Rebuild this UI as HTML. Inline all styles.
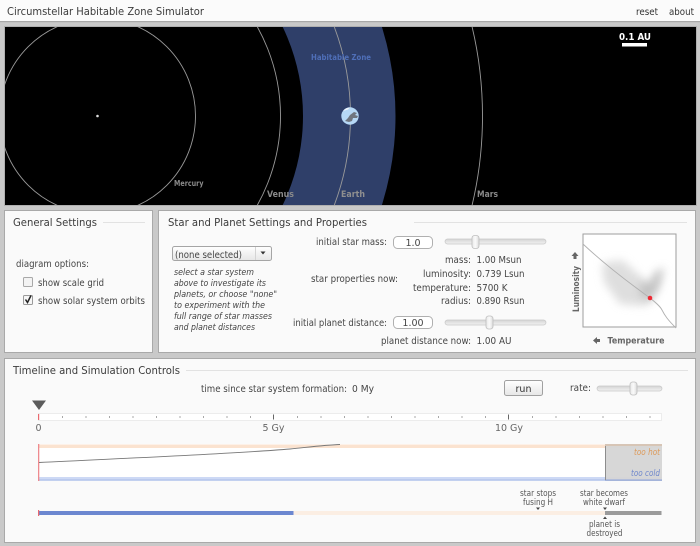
<!DOCTYPE html>
<html><head><meta charset="utf-8"><style>
html,body{margin:0;padding:0;background:#c9c9c9;width:700px;height:546px;overflow:hidden}
svg{display:block;filter:blur(0.3px)}
text{font-family:"DejaVu Sans","Liberation Sans",sans-serif;fill:#444;font-size:9.5px}
.h{font-size:11px;fill:#3c3c3c}
.l{font-size:9.5px;fill:#454545}
.s{font-size:8.5px;fill:#555}
.i{font-size:8.5px;font-style:italic;fill:#444}
.e{text-anchor:end}
.m{text-anchor:middle}
</style></head><body>
<svg width="700" height="546" viewBox="0 0 700 546" xmlns="http://www.w3.org/2000/svg">
<defs>
<clipPath id="v"><rect x="5" y="27" width="691" height="178"/></clipPath>
<filter id="b" x="-40%" y="-40%" width="180%" height="180%"><feGaussianBlur stdDeviation="4.5"/></filter>
<filter id="b2" x="-30%" y="-30%" width="160%" height="160%"><feGaussianBlur stdDeviation="0.35"/></filter>
<linearGradient id="sl" x1="0" y1="0" x2="0" y2="1"><stop offset="0" stop-color="#d4d4d4"/><stop offset="1" stop-color="#f2f2f2"/></linearGradient>
<linearGradient id="th" x1="0" y1="0" x2="1" y2="0"><stop offset="0" stop-color="#e8e8e8"/><stop offset=".5" stop-color="#fafafa"/><stop offset="1" stop-color="#dcdcdc"/></linearGradient>
<linearGradient id="btn" x1="0" y1="0" x2="0" y2="1"><stop offset="0" stop-color="#fff"/><stop offset="1" stop-color="#e6e6e6"/></linearGradient>
<clipPath id="hr"><rect x="583" y="234" width="93" height="93"/></clipPath>
</defs>

<!-- header -->
<rect x="0" y="0" width="700" height="21.5" fill="#fbfbfb"/>
<rect x="0" y="21" width="700" height="1.2" fill="#a8a8a8"/>
<text x="7" y="15" class="h" textLength="197" lengthAdjust="spacingAndGlyphs">Circumstellar Habitable Zone Simulator</text>
<text x="636" y="15" textLength="22" lengthAdjust="spacingAndGlyphs" style="font-size:10px;fill:#333">reset</text>
<text x="669" y="15" textLength="25" lengthAdjust="spacingAndGlyphs" style="font-size:10px;fill:#333">about</text>

<!-- viewport -->
<rect x="4" y="26" width="693" height="180" fill="#b0b0b0"/>
<rect x="5" y="27" width="691" height="178" fill="#000"/>
<g clip-path="url(#v)">
<path d="M97.5 116m-298 0a298 298 0 1 0 596 0a298 298 0 1 0 -596 0zM97.5 116m-205.500 0a205.500 205.500 0 1 0 411 0a205.500 205.500 0 1 0 -411 0z" fill="#2f3f69" fill-rule="evenodd"/>
<g fill="none" stroke="#9a9a9a" stroke-width="0.9">
<circle cx="97.500" cy="116" r="98"/>
<circle cx="97.500" cy="116" r="183"/>
<circle cx="97.500" cy="116" r="253"/>
<circle cx="97.500" cy="116" r="385"/>
</g>
</g>
<circle cx="97.500" cy="116" r="1.300" fill="#ddd"/>
<g filter="url(#b2)">
<circle cx="350" cy="116" r="8.700" fill="#b6d8f6"/>
<path d="M345 121l3-3 2-3 4-3 3 1-2 2 3 1-1 2-4 0-1 3-3 1z" fill="#6f7680"/>
<path d="M343 111a8.700 8.700 0 0 1 7-3.500l-2 2z" fill="#eef5fc"/>
</g>
<text x="311" y="60" style="font-size:7.500px;font-weight:bold;fill:#4f6fb8" textLength="60" lengthAdjust="spacingAndGlyphs">Habitable Zone</text>
<text x="174" y="186" style="font-size:7.500px;font-weight:bold;fill:#8a8a8a" textLength="29.500" lengthAdjust="spacingAndGlyphs">Mercury</text>
<text x="267" y="197" style="font-size:8.500px;font-weight:bold;fill:#8a8a8a" textLength="27" lengthAdjust="spacingAndGlyphs">Venus</text>
<text x="341" y="197" style="font-size:8.500px;font-weight:bold;fill:#8f8f8f" textLength="24" lengthAdjust="spacingAndGlyphs">Earth</text>
<text x="477" y="197" style="font-size:8.500px;font-weight:bold;fill:#8a8a8a" textLength="21" lengthAdjust="spacingAndGlyphs">Mars</text>
<text x="619" y="40" style="font-size:9.500px;font-weight:bold;fill:#fff" textLength="32" lengthAdjust="spacingAndGlyphs">0.1 AU</text>
<rect x="622" y="43" width="25" height="3.500" fill="#fff"/>

<!-- panels -->
<g fill="#fafafa" stroke="#a9a9a9" stroke-width="1">
<rect x="4.500" y="210.500" width="148" height="142"/>
<rect x="158.500" y="210.500" width="537" height="142"/>
<rect x="4.500" y="358.500" width="691" height="184"/>
</g>

<!-- General -->
<text x="13" y="226" class="h" textLength="84" lengthAdjust="spacingAndGlyphs">General Settings</text>
<rect x="103" y="222" width="42" height="1" fill="#e2e2e2"/>
<text x="16" y="267" class="l" textLength="73" lengthAdjust="spacingAndGlyphs">diagram options:</text>
<rect x="23.500" y="277.500" width="9" height="9" rx="1" fill="#f3f3f3" stroke="#a8a8a8"/>
<text x="38" y="286" class="l" textLength="66" lengthAdjust="spacingAndGlyphs">show scale grid</text>
<rect x="23.500" y="295.500" width="9" height="9" rx="1" fill="#f6f6f6" stroke="#9a9a9a"/>
<path d="M25.500 299.500l2 3 3.500-7" fill="none" stroke="#222" stroke-width="1.500"/>
<text x="38" y="304" class="l" textLength="107" lengthAdjust="spacingAndGlyphs">show solar system orbits</text>

<!-- Star and planet -->
<text x="168" y="226" class="h" textLength="199" lengthAdjust="spacingAndGlyphs">Star and Planet Settings and Properties</text>
<rect x="414" y="222" width="273" height="1" fill="#e2e2e2"/>
<rect x="172.500" y="246.500" width="99" height="14" rx="2" fill="url(#btn)" stroke="#a5a5a5"/>
<rect x="255" y="247" width="1" height="13" fill="#d4d4d4"/>
<path d="M260.500 251.500h5l-2.500 3z" fill="#333"/>
<text x="175" y="258" class="l" textLength="67" lengthAdjust="spacingAndGlyphs">(none selected)</text>
<text x="174" y="275" class="i" textLength="80" lengthAdjust="spacingAndGlyphs">select a star system</text>
<text x="174" y="286" class="i" textLength="92" lengthAdjust="spacingAndGlyphs">above to investigate its</text>
<text x="174" y="297" class="i" textLength="103" lengthAdjust="spacingAndGlyphs">planets, or choose "none"</text>
<text x="174" y="308" class="i" textLength="91" lengthAdjust="spacingAndGlyphs">to experiment with the</text>
<text x="174" y="319" class="i" textLength="98" lengthAdjust="spacingAndGlyphs">full range of star masses</text>
<text x="174" y="330" class="i" textLength="81" lengthAdjust="spacingAndGlyphs">and planet distances</text>

<text x="316" y="245" class="l" textLength="71" lengthAdjust="spacingAndGlyphs">initial star mass:</text>
<rect x="393.500" y="236.500" width="39" height="12" rx="4" fill="#fff" stroke="#b0b0b0"/>
<text x="413" y="246" class="l m">1.0</text>
<rect x="445" y="239" width="101" height="5" rx="2.500" fill="url(#sl)" stroke="#c8c8c8" stroke-width=".7"/>
<rect x="472" y="235.500" width="7" height="13" rx="2.500" fill="url(#th)" stroke="#bdbdbd" stroke-width=".8"/>

<text x="471" y="263" class="l" text-anchor="end" textLength="26" lengthAdjust="spacingAndGlyphs">mass:</text>
<text x="476.500" y="263" class="l" textLength="45" lengthAdjust="spacingAndGlyphs">1.00 Msun</text>
<text x="471" y="277" class="l" text-anchor="end" textLength="48" lengthAdjust="spacingAndGlyphs">luminosity:</text>
<text x="476.500" y="277" class="l" textLength="48" lengthAdjust="spacingAndGlyphs">0.739 Lsun</text>
<text x="471" y="291" class="l" text-anchor="end" textLength="58" lengthAdjust="spacingAndGlyphs">temperature:</text>
<text x="476.500" y="291" class="l" textLength="31" lengthAdjust="spacingAndGlyphs">5700 K</text>
<text x="471" y="304" class="l" text-anchor="end" textLength="30" lengthAdjust="spacingAndGlyphs">radius:</text>
<text x="476.500" y="304" class="l" textLength="48" lengthAdjust="spacingAndGlyphs">0.890 Rsun</text>
<text x="311" y="282" class="l" textLength="87" lengthAdjust="spacingAndGlyphs">star properties now:</text>

<text x="293" y="326" class="l" textLength="94" lengthAdjust="spacingAndGlyphs">initial planet distance:</text>
<rect x="393.500" y="316.500" width="39" height="12" rx="4" fill="#fff" stroke="#b0b0b0"/>
<text x="413" y="326" class="l m">1.00</text>
<rect x="445" y="320" width="101" height="5" rx="2.500" fill="url(#sl)" stroke="#c8c8c8" stroke-width=".7"/>
<rect x="486" y="316" width="7" height="13" rx="2.500" fill="url(#th)" stroke="#bdbdbd" stroke-width=".8"/>
<text x="381" y="344" class="l" textLength="90" lengthAdjust="spacingAndGlyphs">planet distance now:</text>
<text x="476.500" y="344" class="l" textLength="35" lengthAdjust="spacingAndGlyphs">1.00 AU</text>

<!-- HR diagram -->
<rect x="583" y="234" width="93" height="93" fill="#fff"/>
<g clip-path="url(#hr)">
<path d="M602 263l20-3 18 16 10 8 8-14 7-3-6 20-8 14-6 5-25-2-16-22z" fill="#d6d6d6" filter="url(#b)" opacity=".8"/>
<path d="M640 280l8 6 8-14 6-2-4 18-10 14-8-8z" fill="#b8b8b8" filter="url(#b)" opacity=".75"/>
</g>
<rect x="583" y="234" width="93" height="93" fill="none" stroke="#9d9d9d"/>
<path d="M583 244C600 260 625 280 650 298C655 302 660 306 662 310C665 316 668 320 676 328" fill="none" stroke="#b0b0b0" stroke-width=".9"/>
<circle cx="650" cy="298" r="2.300" fill="#ee2a35"/>
<path d="M575 252l3.500 4h-2v3h-3v-3h-2z" fill="#666"/>
<text transform="translate(579,312) rotate(-90)" style="font-size:9px;font-weight:bold;fill:#666" textLength="46" lengthAdjust="spacingAndGlyphs">Luminosity</text>
<path d="M593 340.500l4-3.500v2h3v3h-3v2z" fill="#666"/>
<text x="607.500" y="343.500" style="font-size:9px;font-weight:bold;fill:#666" textLength="57" lengthAdjust="spacingAndGlyphs">Temperature</text>

<!-- Timeline -->
<text x="13" y="374" class="h" textLength="167" lengthAdjust="spacingAndGlyphs">Timeline and Simulation Controls</text>
<rect x="186" y="370" width="502" height="1" fill="#e2e2e2"/>
<text x="201" y="392" class="l" textLength="146" lengthAdjust="spacingAndGlyphs">time since star system formation:</text>
<text x="352" y="392" class="l" textLength="22" lengthAdjust="spacingAndGlyphs">0 My</text>
<rect x="504.500" y="380.500" width="38" height="15" rx="2" fill="url(#btn)" stroke="#a0a0a0"/>
<text x="523.500" y="392" class="l m" style="fill:#333">run</text>
<text x="570" y="391" class="l" textLength="21" lengthAdjust="spacingAndGlyphs">rate:</text>
<rect x="597" y="386" width="65" height="5" rx="2.500" fill="url(#sl)" stroke="#c8c8c8" stroke-width=".7"/>
<rect x="630" y="382" width="7" height="13" rx="2.500" fill="url(#th)" stroke="#bdbdbd" stroke-width=".8"/>

<path d="M32 400.500h14l-7 9.500z" fill="#5c5c5c"/>
<rect x="38.500" y="413.500" width="623" height="7" fill="#fff" stroke="#ececec"/>
<g fill="#a8a8a8">
<rect x="62" y="416" width="1" height="2"/><rect x="85.500" y="416" width="1" height="2"/><rect x="109" y="416" width="1" height="2"/><rect x="132.500" y="416" width="1" height="2"/><rect x="156" y="416" width="1" height="2"/><rect x="179.500" y="416" width="1" height="2"/><rect x="203" y="416" width="1" height="2"/><rect x="226.500" y="416" width="1" height="2"/><rect x="250" y="416" width="1" height="2"/>
<rect x="297" y="416" width="1" height="2"/><rect x="320.500" y="416" width="1" height="2"/><rect x="344" y="416" width="1" height="2"/><rect x="367.500" y="416" width="1" height="2"/><rect x="391" y="416" width="1" height="2"/><rect x="414.500" y="416" width="1" height="2"/><rect x="438" y="416" width="1" height="2"/><rect x="461.500" y="416" width="1" height="2"/><rect x="485" y="416" width="1" height="2"/>
<rect x="532" y="416" width="1" height="2"/><rect x="555.500" y="416" width="1" height="2"/><rect x="579" y="416" width="1" height="2"/><rect x="602.500" y="416" width="1" height="2"/><rect x="626" y="416" width="1" height="2"/><rect x="649.500" y="416" width="1" height="2"/>
</g>
<rect x="273" y="414.500" width="1" height="5" fill="#666"/>
<rect x="508" y="414.500" width="1" height="5" fill="#666"/>
<rect x="38" y="414" width="1.200" height="6" fill="#e9696f"/>
<text x="38.500" y="431" class="l m" style="fill:#666">0</text>
<text x="273.500" y="431" class="l m" style="fill:#666">5 Gy</text>
<text x="509" y="431" class="l m" style="fill:#666">10 Gy</text>

<rect x="38" y="444" width="624" height="37" fill="#fff"/>
<rect x="38" y="444.500" width="624" height="3.500" fill="#fbe3d0"/>
<rect x="38" y="477" width="624" height="3.500" fill="#cdd9f5"/>
<rect x="38" y="479.500" width="624" height="1.200" fill="#a9bbe8"/>
<rect x="605" y="444" width="57" height="37" fill="#d5d5d5" fill-opacity=".95"/>
<rect x="605" y="444" width="57" height="2" fill="#d7b9a0" opacity=".6"/>
<rect x="605" y="479.500" width="57" height="1.200" fill="#8fa5dc"/>
<rect x="605" y="446" width="1" height="34" fill="#8d8d8d"/>
<rect x="38" y="444" width="1.300" height="37" fill="#ee8a8f"/>
<path d="M39 462.500C130 458 230 454 290 449c20-2 35-4 50-4.500" fill="none" stroke="#777" stroke-width=".9"/>
<text x="660" y="455" class="i" text-anchor="end" textLength="26" lengthAdjust="spacingAndGlyphs" style="fill:#dd9a5a">too hot</text>
<text x="660" y="476" class="i" text-anchor="end" textLength="29" lengthAdjust="spacingAndGlyphs" style="fill:#7088cc">too cold</text>

<rect x="38" y="511" width="567" height="4" fill="#fbeee3"/>
<rect x="38" y="511" width="255.500" height="4" fill="#6c87d0"/>
<rect x="605" y="511" width="56.500" height="4" fill="#9b9b9b"/>
<rect x="38" y="510" width="1.200" height="6" fill="#e9696f"/>
<text x="538" y="496" class="s m" textLength="36" lengthAdjust="spacingAndGlyphs">star stops</text>
<text x="538" y="505" class="s m" textLength="30" lengthAdjust="spacingAndGlyphs">fusing H</text>
<path d="M536 507.500h4l-2 2.500z" fill="#444"/>
<text x="604" y="496" class="s m" textLength="48" lengthAdjust="spacingAndGlyphs">star becomes</text>
<text x="604" y="505" class="s m" textLength="42" lengthAdjust="spacingAndGlyphs">white dwarf</text>
<path d="M603 507.500h4l-2 2.500z" fill="#444"/>
<path d="M603 519h4l-2-2.500z" fill="#444"/>
<text x="604.500" y="527" class="s m" textLength="31" lengthAdjust="spacingAndGlyphs">planet is</text>
<text x="604.500" y="536" class="s m" textLength="36" lengthAdjust="spacingAndGlyphs">destroyed</text>
</svg>
</body></html>
